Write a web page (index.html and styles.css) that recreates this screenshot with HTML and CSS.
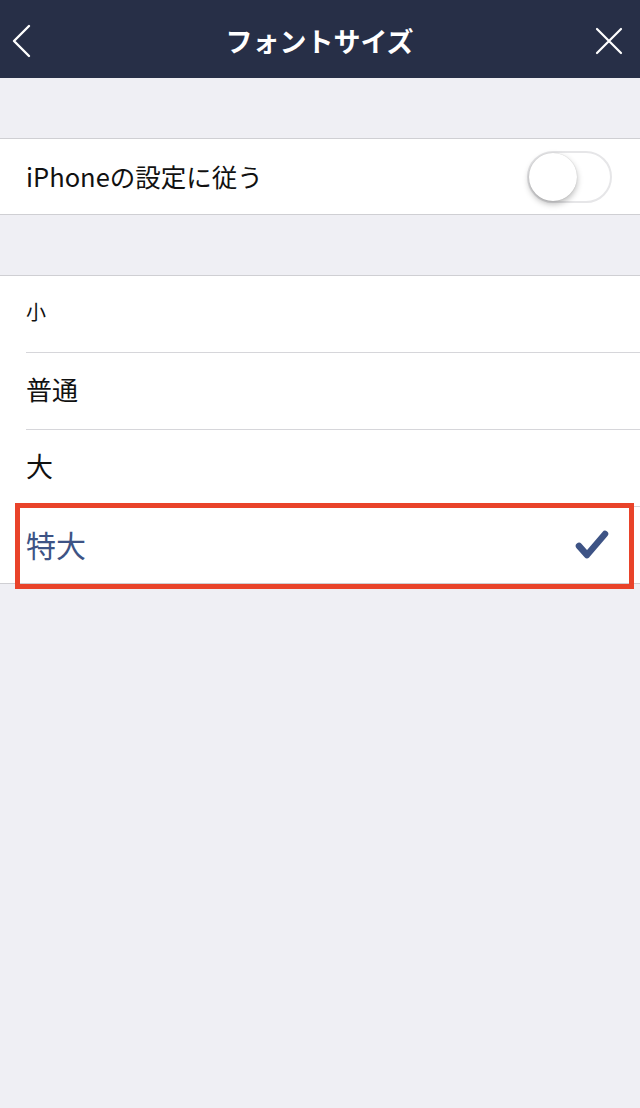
FILE: index.html
```html
<!DOCTYPE html>
<html lang="ja">
<head>
<meta charset="utf-8">
<link rel="stylesheet" href="styles.css">
</head>
<body>
<header class="nav">
  <svg class="nav-back" width="22" height="34" viewBox="0 0 22 34"><polyline points="19,2 4,17 19,32" fill="none" stroke="#fff" stroke-width="2.4" stroke-linecap="round" stroke-linejoin="round"/></svg>
  <h1 class="nav-title">フォントサイズ</h1>
  <svg class="nav-close" width="28" height="28" viewBox="0 0 28 28"><path d="M2 2 L26 26 M26 2 L2 26" stroke="#fff" stroke-width="2.2" stroke-linecap="round"/></svg>
</header>
<div class="spacer"></div>
<section class="group">
  <div class="toggle-row">
    <span class="label">iPhoneの設定に従う</span>
    <div class="switch"><div class="knob"></div></div>
  </div>
</section>
<div class="spacer"></div>
<section class="group">
  <div class="item"><span class="size-s">小</span></div>
  <div class="item"><span class="size-m">普通</span></div>
  <div class="item"><span class="size-l">大</span></div>
  <div class="item item-last selected">
    <span class="size-xl">特大</span>
    <svg class="check" width="36" height="32" viewBox="0 0 36 32"><polyline points="5,17 13,26 31,5" fill="none" stroke="#3d5385" stroke-width="6.5" stroke-linecap="round" stroke-linejoin="round"/></svg>
    <div class="highlight"></div>
  </div>
</section>
</body>
</html>
```
FILE: styles.css
```css
html, body {
  margin: 0;
  padding: 0;
  background: #efeff4;
  font-family: "Noto Sans CJK JP", "Noto Sans", sans-serif;
  width: 640px;
  height: 1108px;
}
.nav {
  height: 78px;
  background: #272f47;
  display: flex;
  align-items: center;
  justify-content: space-between;
  padding: 0 16px 0 10px;
  box-sizing: border-box;
}
.nav-back { display: block; margin-top: 4px; }
.nav-close { display: block; margin-right: 1px; margin-top: 4px; }
.nav-title {
  margin: 2px 0 0 12px;
  color: #fff;
  font-size: 27px;
  font-weight: 700;
}
.spacer { height: 60px; }
.group {
  background: #fff;
  border-top: 1px solid #cfcfd3;
  border-bottom: 1px solid #cfcfd3;
}
.toggle-row {
  height: 75px;
  display: flex;
  align-items: center;
  justify-content: space-between;
  padding: 0 28px 0 26px;
}
.label {
  font-size: 25.5px;
  color: #111;
  margin-bottom: 2px;
}
.switch {
  width: 85px;
  height: 52px;
  border-radius: 26px;
  border: 2px solid #e6e6e8;
  box-sizing: border-box;
  background: #fff;
  display: flex;
  align-items: center;
}
.knob {
  width: 48px;
  height: 48px;
  border-radius: 50%;
  background: #fff;
  box-shadow: 0 3px 6px rgba(0,0,0,0.28), 0 0 1px rgba(0,0,0,0.2);
}
.item {
  position: relative;
  margin-left: 26px;
  height: 76px;
  border-bottom: 1px solid #d6d6da;
  display: flex;
  align-items: center;
  justify-content: space-between;
  padding-right: 30px;
  padding-bottom: 5px;
  box-sizing: border-box;
  height: 77px;
  color: #111;
}
.item-last { border-bottom: none; padding-bottom: 2px; height: 76px; }
.size-s { font-size: 20px; }
.size-m { font-size: 26px; }
.size-l { font-size: 27px; }
.size-xl { font-size: 30px; color: #3d5385; }
.check { display: block; margin-top: 2px; }
.highlight {
  position: absolute;
  left: -11px;
  right: 6px;
  top: -4px;
  bottom: -6px;
  border: 5px solid #e9432a;
  pointer-events: none;
}
```
